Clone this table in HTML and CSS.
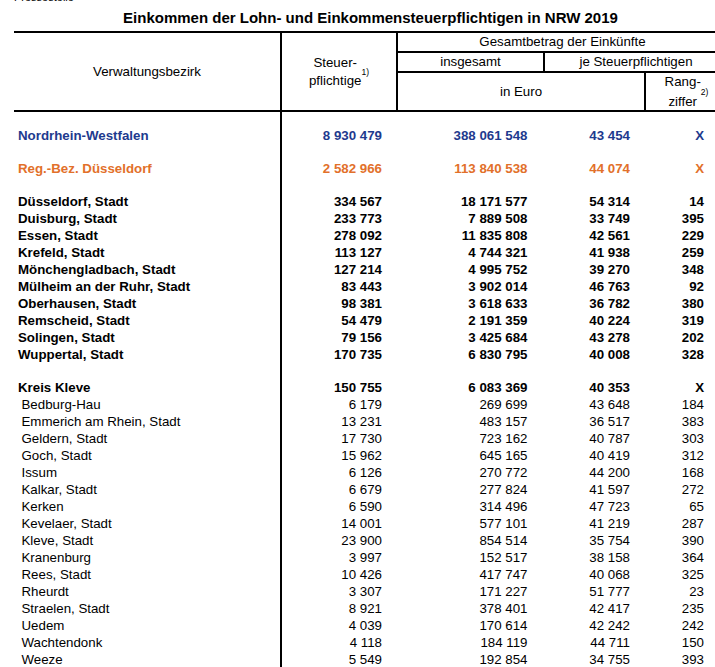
FILE: index.html
```html
<!DOCTYPE html>
<html lang="de">
<head>
<meta charset="utf-8">
<title>Einkommen der Lohn- und Einkommensteuerpflichtigen in NRW 2019</title>
<link rel="stylesheet" href="styles.css">
</head>
<body>
<div class="page">
  <div class="source">Pressestelle</div>
  <h1 class="title">Einkommen der Lohn- und Einkommensteuerpflichtigen in NRW 2019</h1>
  <div class="head">
    <div class="h h-name">Verwaltungsbezirk</div>
    <div class="h h-count">Steuer-<br>pflichtige<sup>1)</sup></div>
    <div class="h h-total">Gesamtbetrag der Einkünfte</div>
    <div class="h h-sum">insgesamt</div>
    <div class="h h-per">je Steuerpflichtigen</div>
    <div class="h h-euro">in Euro</div>
    <div class="h h-rank">Rang-<br>ziffer<sup>2)</sup></div>
  </div>
  <div class="body">
    <div class="row spacer"><span></span><span class="c1"></span></div>
    <div class="row nrw"><span class="name">Nordrhein-Westfalen</span><span class="num c1">8 930 479</span><span class="num c2">388 061 548</span><span class="num c3">43 454</span><span class="num c4">X</span></div>
    <div class="row blank"><span></span><span class="c1"></span></div>
    <div class="row reg"><span class="name">Reg.-Bez. Düsseldorf</span><span class="num c1">2 582 966</span><span class="num c2">113 840 538</span><span class="num c3">44 074</span><span class="num c4">X</span></div>
    <div class="row blank"><span></span><span class="c1"></span></div>
    <div class="row bold"><span class="name">Düsseldorf, Stadt</span><span class="num c1">334 567</span><span class="num c2">18 171 577</span><span class="num c3">54 314</span><span class="num c4">14</span></div>
    <div class="row bold"><span class="name">Duisburg, Stadt</span><span class="num c1">233 773</span><span class="num c2">7 889 508</span><span class="num c3">33 749</span><span class="num c4">395</span></div>
    <div class="row bold"><span class="name">Essen, Stadt</span><span class="num c1">278 092</span><span class="num c2">11 835 808</span><span class="num c3">42 561</span><span class="num c4">229</span></div>
    <div class="row bold"><span class="name">Krefeld, Stadt</span><span class="num c1">113 127</span><span class="num c2">4 744 321</span><span class="num c3">41 938</span><span class="num c4">259</span></div>
    <div class="row bold"><span class="name">Mönchengladbach, Stadt</span><span class="num c1">127 214</span><span class="num c2">4 995 752</span><span class="num c3">39 270</span><span class="num c4">348</span></div>
    <div class="row bold"><span class="name">Mülheim an der Ruhr, Stadt</span><span class="num c1">83 443</span><span class="num c2">3 902 014</span><span class="num c3">46 763</span><span class="num c4">92</span></div>
    <div class="row bold"><span class="name">Oberhausen, Stadt</span><span class="num c1">98 381</span><span class="num c2">3 618 633</span><span class="num c3">36 782</span><span class="num c4">380</span></div>
    <div class="row bold"><span class="name">Remscheid, Stadt</span><span class="num c1">54 479</span><span class="num c2">2 191 359</span><span class="num c3">40 224</span><span class="num c4">319</span></div>
    <div class="row bold"><span class="name">Solingen, Stadt</span><span class="num c1">79 156</span><span class="num c2">3 425 684</span><span class="num c3">43 278</span><span class="num c4">202</span></div>
    <div class="row bold"><span class="name">Wuppertal, Stadt</span><span class="num c1">170 735</span><span class="num c2">6 830 795</span><span class="num c3">40 008</span><span class="num c4">328</span></div>
    <div class="row blank"><span></span><span class="c1"></span></div>
    <div class="row bold"><span class="name">Kreis Kleve</span><span class="num c1">150 755</span><span class="num c2">6 083 369</span><span class="num c3">40 353</span><span class="num c4">X</span></div>
    <div class="row sub"><span class="name">Bedburg-Hau</span><span class="num c1">6 179</span><span class="num c2">269 699</span><span class="num c3">43 648</span><span class="num c4">184</span></div>
    <div class="row sub"><span class="name">Emmerich am Rhein, Stadt</span><span class="num c1">13 231</span><span class="num c2">483 157</span><span class="num c3">36 517</span><span class="num c4">383</span></div>
    <div class="row sub"><span class="name">Geldern, Stadt</span><span class="num c1">17 730</span><span class="num c2">723 162</span><span class="num c3">40 787</span><span class="num c4">303</span></div>
    <div class="row sub"><span class="name">Goch, Stadt</span><span class="num c1">15 962</span><span class="num c2">645 165</span><span class="num c3">40 419</span><span class="num c4">312</span></div>
    <div class="row sub"><span class="name">Issum</span><span class="num c1">6 126</span><span class="num c2">270 772</span><span class="num c3">44 200</span><span class="num c4">168</span></div>
    <div class="row sub"><span class="name">Kalkar, Stadt</span><span class="num c1">6 679</span><span class="num c2">277 824</span><span class="num c3">41 597</span><span class="num c4">272</span></div>
    <div class="row sub"><span class="name">Kerken</span><span class="num c1">6 590</span><span class="num c2">314 496</span><span class="num c3">47 723</span><span class="num c4">65</span></div>
    <div class="row sub"><span class="name">Kevelaer, Stadt</span><span class="num c1">14 001</span><span class="num c2">577 101</span><span class="num c3">41 219</span><span class="num c4">287</span></div>
    <div class="row sub"><span class="name">Kleve, Stadt</span><span class="num c1">23 900</span><span class="num c2">854 514</span><span class="num c3">35 754</span><span class="num c4">390</span></div>
    <div class="row sub"><span class="name">Kranenburg</span><span class="num c1">3 997</span><span class="num c2">152 517</span><span class="num c3">38 158</span><span class="num c4">364</span></div>
    <div class="row sub"><span class="name">Rees, Stadt</span><span class="num c1">10 426</span><span class="num c2">417 747</span><span class="num c3">40 068</span><span class="num c4">325</span></div>
    <div class="row sub"><span class="name">Rheurdt</span><span class="num c1">3 307</span><span class="num c2">171 227</span><span class="num c3">51 777</span><span class="num c4">23</span></div>
    <div class="row sub"><span class="name">Straelen, Stadt</span><span class="num c1">8 921</span><span class="num c2">378 401</span><span class="num c3">42 417</span><span class="num c4">235</span></div>
    <div class="row sub"><span class="name">Uedem</span><span class="num c1">4 039</span><span class="num c2">170 614</span><span class="num c3">42 242</span><span class="num c4">242</span></div>
    <div class="row sub"><span class="name">Wachtendonk</span><span class="num c1">4 118</span><span class="num c2">184 119</span><span class="num c3">44 711</span><span class="num c4">150</span></div>
    <div class="row sub"><span class="name">Weeze</span><span class="num c1">5 549</span><span class="num c2">192 854</span><span class="num c3">34 755</span><span class="num c4">393</span></div>
  </div>
</div>
</body>
</html>
```
FILE: styles.css
```css
html, body {
  margin: 0;
  padding: 0;
  background: #fff;
  overflow: hidden;
}
body {
  width: 715px;
  height: 667px;
  font-family: "Liberation Sans", Arial, sans-serif;
  color: #000;
}
.page {
  width: 713px;
  margin-left: 14px;
}
.source {
  font-size: 11px;
  line-height: 12px;
  height: 12px;
  margin-top: -9px;
}
.title {
  font-size: 15px;
  font-weight: bold;
  line-height: 18px;
  text-align: center;
  margin: 6px 0 4px;
  white-space: nowrap;
}
.head {
  display: grid;
  grid-template-columns: 266px 114px 145px 99px 81px;
  grid-template-rows: 18px 18px 37px;
  gap: 2px;
  background: #000;
  border-top: 2px solid #000;
  border-bottom: 2px solid #000;
  font-size: 13.3px;
}
.h {
  background: #fff;
  display: flex;
  align-items: center;
  justify-content: center;
  text-align: center;
  line-height: 18px;
  white-space: nowrap;
}
.h-name { grid-column: 1; grid-row: 1 / 4; }
.h-count { grid-column: 2; grid-row: 1 / 4; }
.h-total { grid-column: 3 / 6; grid-row: 1; }
.h-sum { grid-column: 3; grid-row: 2; }
.h-per { grid-column: 4 / 6; grid-row: 2; }
.h-euro { grid-column: 3 / 5; grid-row: 3; }
.h-rank { grid-column: 5; grid-row: 3; line-height: 20px; }
sup {
  font-size: 8.5px;
  line-height: 0;
  vertical-align: 4px;
}
.row {
  display: grid;
  grid-template-columns: 266px 116px 147px 101px 83px;
  height: 17px;
  line-height: 17px;
  font-size: 13.3px;
  white-space: nowrap;
}
.row > span {
  box-sizing: border-box;
}
.row > .c1 {
  border-left: 2px solid #000;
}
.spacer { height: 15px; }
.blank { height: 16px; }
.num { text-align: right; }
.c1 { padding-right: 14px; }
.c2 { padding-right: 15.5px; }
.c3 { padding-right: 14px; }
.c4 { padding-right: 23px; }
.name { padding-left: 4px; }
.sub .name { padding-left: 7.5px; }
.bold { font-weight: bold; }
.nrw { font-weight: bold; color: #1e3a8e; }
.reg { font-weight: bold; color: #e2702a; }
```
